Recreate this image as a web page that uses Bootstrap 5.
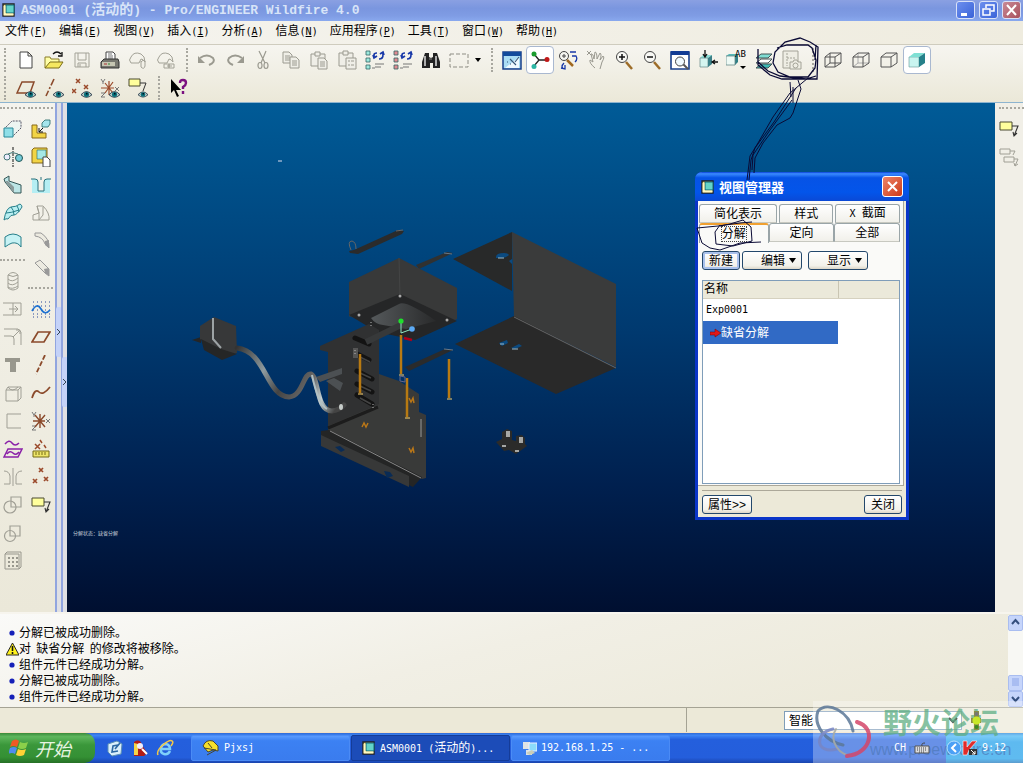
<!DOCTYPE html>
<html lang="zh-CN">
<head>
<meta charset="utf-8">
<meta name="viewport" content="width=device-width, initial-scale=1">
<title>ASM0001 (活动的) - Pro/ENGINEER Wildfire 4.0</title>
<link href="https://cdn.jsdelivr.net/npm/bootstrap@5.3.0/dist/css/bootstrap.min.css" rel="stylesheet">
<script src="https://cdn.jsdelivr.net/npm/bootstrap@5.3.0/dist/js/bootstrap.bundle.min.js"></script>
<style>
body{background:#fff;color:#000;font:12px/16px "Liberation Sans","Noto Sans CJK SC",sans-serif}
button,select,input{font:inherit;color:inherit}
svg{display:block}
.half{font:10px/16px "DejaVu Sans Mono",monospace}
.desk{min-height:100vh;padding:0 1px 5px 0}
.face{background:#ece9d8}
/* window title */
.win-title{height:21px;padding:0 2px 2px 2px;background:linear-gradient(#8aa0e2,#7a96df 40%,#7f9ce4 75%,#89a9ee);color:#d8e4f8}
.win-title h1{font:bold 14px/18px "Noto Sans CJK SC",sans-serif;margin:0;padding-left:5px;white-space:pre}
.win-title .half{font:bold 13px/18px "Liberation Mono",monospace}
.capt{width:19px;height:18px;padding:0;border:1px solid #d9e2f8;border-radius:3px;background:linear-gradient(135deg,#6c8fee,#3a63d8)}
.capt.shut{background:linear-gradient(135deg,#c98a96,#a8505c)}
/* menu */
.menus{height:24px;padding:0 5px 2px;gap:12px;background:linear-gradient(90deg,#f5f4ef,#efecdf);border-bottom:1px solid #cfccbe}
.menus a{color:#000;text-decoration:none;white-space:nowrap}
.bars{height:58px;padding:1px 0;background:linear-gradient(#f6f5f0,#ebe8d8);border-bottom:1px solid #8db4cf}
.tool{width:28px;height:28px;padding:3px;border:1px solid transparent;border-radius:4px;background:none;flex:none}
.tool svg{width:20px;height:20px}
.tool.held{background:#fff;border-color:#a9b8d0}
.grip-v{height:24px;border-left:2px dotted #a8a79f;flex:none}
.g-start{margin:0 5px 0 4px;width:3px}
.g-mid{margin:0 5px 0 6px;width:2px}
.drop{width:12px;padding:0;border:0;background:none}
.grip-h{height:12px;width:25px;padding-top:4px}
.grip-h::before{content:"";display:block;border-top:2px dotted #a8a79f}
.side{width:55px;background:linear-gradient(#f4f3ed,#ebe8d9)}
.side-col{width:28px}
.side-col .tool{margin-left:-1px}
.sash{width:6px;border-left:2px solid #91a5df;background:#dfe0e4}
.sash button{width:6px;height:50px;margin-left:-1px;padding:0;border:0;background:#c4d2f8;border-radius:2px}
.s1 button{margin-top:204px}.s2 button{margin-top:254px}
.stage{background:linear-gradient(#005b97,#00396f 45%,#00204f 75%,#000f30);min-width:0;min-height:509px}
.stage>svg{width:100%;height:100%;position:absolute;inset:0}
.right{width:28px;background:#f1efe7}
/* view manager */
.mgr{right:86px;top:69px;width:214px;border:3px solid #0a35c8;border-top:0;border-radius:7px 7px 0 0;background:#ece9d8;z-index:3}
.mgr-head{height:29px;margin:0 -3px;padding:0 6px;border-radius:7px 7px 0 0;background:linear-gradient(#0a3fd8,#3a8bff 6%,#0653e6 20%,#0355ea 70%,#0a49d6);color:#fff}
.mgr-head h2{font:bold 13px/20px "Noto Sans CJK SC",sans-serif;margin:0;padding-left:4px}
.mgr-shut{width:21px;height:21px;padding:0;border:1px solid #fff;border-radius:3px;background:linear-gradient(135deg,#ee8468,#cc3a18)}
.pane{margin:0 2px 0 0;padding:3px 3px 1px 0;background:#fafaf8;border-right:1px solid #aca899;border-bottom:1px solid #aca899}
.tabs{padding-left:1px}
.tabs .first{gap:2px}
.tabs button{height:19px;padding:0;border:1px solid #9aa5a8;border-bottom-color:#c7c8c0;border-radius:3px 3px 0 0;background:linear-gradient(#fff,#f1f0ea);white-space:nowrap}
.tabs button.on{background:#fafaf8;border-top:2px solid #f0a030;border-bottom:0;height:20px}
.on span{outline:1px dotted #444}
.w80{flex:80 1 0}.w66{flex:66 1 0}.w55{flex:55 1 0}.w70{flex:70 1 0}
.acts{gap:2px}
.xp{height:19px;padding:0;border:1px solid #23486c;border-radius:3px;background:linear-gradient(#fff,#f2f1ea 80%,#dcd7c8);line-height:16px}
.xp.def{box-shadow:inset 0 0 0 2px #a9c1ec}
.xp.s{width:38px}.xp.m{width:50px}.xp.l{width:60px}
.list{margin:10px 0 0 4px;height:204px;border:1px solid #7f9db9;background:#fff}
.list table{width:100%;border-collapse:collapse;table-layout:fixed}
.list th{height:17px;padding:0 1px;font-weight:400;background:#ebe9da;border-bottom:1px solid #d5d1bf;line-height:15px}
.list th+th{border-left:1px solid #c9c5b2}
.list td{height:23px;padding:0 3px}
.list .namecol{width:69%}
.list .pick{background:#316ac5;color:#fff}
.foot{margin:4px 4px 0;padding:4px 0 3px;border-top:1px solid #aca899}
/* messages and status */
.log{height:96px;padding:11px 0 0 6px;background:linear-gradient(165deg,#fafaf8,#f1efe5 45%,#ebe8d7);border-top:2px solid #f7f5ee;border-bottom:1px solid #a5a394}
.log li{height:16px}
.log svg{width:13px;height:14px;flex:none}
.gapped{padding:0 2px}
.roll{width:15px;background:#f8f8f4;margin-top:-10px}
.roll button{height:16px;width:15px;padding:0;border:1px solid #a9bdf0;border-radius:2px;background:#c6d5fb}
.status{height:25px;border-bottom:1px solid #f4e0c4}
.status .part{width:337px;border-left:1px solid #a5a394;padding:1px 36px 0 97px}
.status select{height:19px;width:178px;border:1px solid #7f9db9;background:#fff;padding:0;line-height:16px}
/* taskbar */
.task{height:30px;background:linear-gradient(#2f6bd6,#3f85f5 8%,#245fdd 22%,#245edc 82%,#1a45ae);color:#fff}
.start{width:95px;padding:0 0 0 9px;border:0;border-radius:0 10px 10px 0;background:linear-gradient(#3a8a3a,#5eb65c 12%,#3a973a 40%,#349034 80%,#267026);color:#e8f5e2;font:italic 18px/26px "Noto Sans CJK SC",sans-serif;gap:6px}
.quick{gap:5px;padding:0 15px 0 11px}
.quick a{width:20px}
.job{width:159px;height:26px;margin-right:1px;padding:0 10px;border:1px solid #4b8bf5;border-radius:2px;background:linear-gradient(#5a9bff,#3c81f3 20%,#3a7cee);color:#fff;white-space:pre}
.job.now{background:#1c4cb8;border-color:#153c98}
.tray{width:77px;background:linear-gradient(#1a7fd8,#3fb4f5 10%,#159bea 30%,#169cea 85%,#1270b8)}
.front{position:relative;z-index:6}
/* overlays */
.pen{left:690px;top:36px;width:135px;height:220px;pointer-events:none;z-index:5}
.brand{right:0;bottom:5px;width:211px;height:62px;background:#ffffff50;pointer-events:none;z-index:4}
</style>
</head>
<body>
<svg width="0" height="0" class="position-absolute" aria-hidden="true"><defs>
<symbol id="app" viewBox="0 0 14 14"><path d="M1 1h11v12H1z" fill="#ffe98a" stroke="#222" stroke-width="1.400"/><path d="M4 2h8v8H4z" fill="#63d4c8" stroke="#167"/><path d="M2.500 3v8.500h9" fill="none" stroke="#fff8c0" stroke-width="1.800"/></symbol>
<symbol id="eye" viewBox="0 0 10 6"><path d="M0 3.200Q5-2.500 10 3.200Q5 8 0 3.200z" fill="#b9c9c6" stroke="#234" stroke-width=".8"/><circle cx="5" cy="3" r="2.300" fill="#08707a"/><path d="M4.500 1.500h1.500v1.500H4.500z" fill="#012"/></symbol>
<symbol id="flag" viewBox="0 0 20 20"><path d="M1 3h12v8H1z" fill="#ffff9c" stroke="#4b4a30"/><path d="M13 7h6l-4 10m-1-4 1 4 3-3" fill="none" stroke="#333" stroke-width="1.100"/></symbol>
<symbol id="tree" viewBox="0 0 20 20"><g stroke="#366" stroke-width=".8" fill="currentColor"><path d="M1 1h4v4H1zM1 8h4v4H1zM1 15h4v4H1z"/></g><path d="M10 14h9M10 17h6M7 18h3" stroke="#777"/><path d="M9 7V5q0-2 3-2M8 5l1 3 3-2m6-3v2q0 4-4 4m5-4-1-3-3 2" fill="none" stroke="#1838a8" stroke-width="1.700"/></symbol>
</defs></svg>

<div class="desk d-flex flex-column position-relative">
<header>
 <div class="win-title d-flex align-items-center">
  <svg width="14" height="14"><use href="#app"/></svg>
  <h1><span class="half">ASM0001 (</span>活动的<span class="half">) - Pro/ENGINEER Wildfire 4.0</span></h1>
  <div class="ms-auto d-flex gap-1">
   <button class="capt" aria-label="最小化"><svg width="17" height="16"><path d="M4 11h6v3H4z" fill="#fff"/></svg></button>
   <button class="capt" aria-label="还原"><svg width="17" height="16" fill="none" stroke="#fff" stroke-width="1.500"><path d="M6 6V3h8v6h-3M3 7h7v6H3z"/></svg></button>
   <button class="capt shut" aria-label="关闭"><svg width="17" height="16"><path d="m4 3 9 10M13 3 4 13" stroke="#fff" stroke-width="2"/></svg></button>
  </div>
 </div>
 <nav class="menus d-flex align-items-center">
  <a href="#">文件<span class="half">(<u>F</u>)</span></a><a href="#">编辑<span class="half">(<u>E</u>)</span></a><a href="#">视图<span class="half">(<u>V</u>)</span></a><a href="#">插入<span class="half">(<u>I</u>)</span></a><a href="#">分析<span class="half">(<u>A</u>)</span></a><a href="#">信息<span class="half">(<u>N</u>)</span></a><a href="#">应用程序<span class="half">(<u>P</u>)</span></a><a href="#">工具<span class="half">(<u>T</u>)</span></a><a href="#">窗口<span class="half">(<u>W</u>)</span></a><a href="#">帮助<span class="half">(<u>H</u>)</span></a>
 </nav>
 <div class="bars">
  <div class="d-flex align-items-center">
   <i class="grip-v g-start"></i>
   <button class="tool" aria-label="新建"><svg viewBox="0 0 20 20"><path d="M4 2h8l4 4v12H4zM12 2v4h4" fill="#fff" stroke="#444"/></svg></button>
   <button class="tool" aria-label="打开"><svg viewBox="0 0 20 20"><path d="M1 18V7h5l1 2h8v3" fill="#ffffa8" stroke="#8a7c28"/><path d="m1 18 5-6h13l-4 6z" fill="#f6e860" stroke="#7a6c18"/><path d="M9 4q4-4 8 0m1-2v4h-4" fill="none" stroke="#111" stroke-width="1.300"/></svg></button>
   <button class="tool" aria-label="保存"><svg viewBox="0 0 20 20" fill="none" stroke="#a3a297"><path d="M3 3h14v14H3zM6 3v7h8V3M6 17v-4h8v4M8 14v3"/></svg></button>
   <button class="tool" aria-label="打印"><svg viewBox="0 0 20 20"><path d="M6 10V2h7l2 2v6" fill="#fff" stroke="#444"/><path d="M8 4h4M8 6h5M8 8h5" stroke="#777"/><path d="M1 12l3-3h14l1 3v6H1z" fill="#77776f" stroke="#333"/><path d="M2 12h13v4H2z" fill="#c6c6b2"/><path d="M4 14h3" stroke="#a33"/><path d="M8 14h2" stroke="#383"/></svg></button>
   <button class="tool" aria-label="发送"><svg viewBox="0 0 20 20" fill="none" stroke="#a3a297"><path d="M3 13q-3-3 0-6 3-6 10-3 4 2 4 8-2-3-4-3l-2 4zM13 11v6q3 3 4-1v-5q-2-2-4 1"/></svg></button>
   <button class="tool" aria-label="发送链接"><svg viewBox="0 0 20 20" fill="none" stroke="#a3a297"><path d="M3 13q-3-3 0-6 3-6 10-3 4 2 4 8-2-3-4-3l-2 4zM8 14h5v4H8zm5 0h5v4h-5zM11 16h5"/></svg></button>
   <i class="grip-v g-mid"></i>
   <button class="tool" aria-label="撤消"><svg viewBox="0 0 20 20"><path d="M3 8q7-5 13 0 3 4-4 7" fill="none" stroke="#9b9a90" stroke-width="2"/><path d="M1 6v7h7z" fill="#9b9a90"/></svg></button>
   <button class="tool" aria-label="重做"><svg viewBox="0 0 20 20"><path d="M17 8q-7-5-13 0-3 4 4 7" fill="none" stroke="#9b9a90" stroke-width="2"/><path d="M19 6v7h-7z" fill="#9b9a90"/></svg></button>
   <button class="tool" aria-label="剪切"><svg viewBox="0 0 20 20" fill="none" stroke="#9b9a90" stroke-width="1.200"><path d="m6 1 6 12M13 1 8 13"/><ellipse cx="7" cy="15.500" rx="2" ry="3"/><ellipse cx="13" cy="15.500" rx="2" ry="3"/></svg></button>
   <button class="tool" aria-label="复制"><svg viewBox="0 0 20 20" fill="#efeee7" stroke="#9b9a90"><path d="M2 2h6l3 3v8H2zM4 6h5M4 8h5M4 10h5"/><path d="M9 7h6l3 3v8H9zM11 11h5M11 13h5M11 15h5"/></svg></button>
   <button class="tool" aria-label="粘贴"><svg viewBox="0 0 20 20" fill="#efeee7" stroke="#9b9a90"><path d="M2 4h14v12H2z"/><path d="M6 2h5v4H6z"/><path d="M9 8h6l3 3v8H9zM11 12h5M11 14h5M11 16h5"/></svg></button>
   <button class="tool" aria-label="选择性粘贴"><svg viewBox="0 0 20 20" fill="#efeee7" stroke="#9b9a90"><path d="M2 3h14v13H2z"/><path d="M6 1h5v4H6z"/><path d="M9 8h10v11H9zM11 11h2M11 15h2M14 11h3M14 15h3"/></svg></button>
   <button class="tool" aria-label="再生" style="color:#9eeade"><svg><use href="#tree"/></svg></button>
   <button class="tool" aria-label="再生管理器" style="color:#e08a90"><svg><use href="#tree"/></svg></button>
   <button class="tool" aria-label="查找"><svg viewBox="0 0 20 20"><path d="M4 3h4v4l2 1 2-1V3h4l3 9v6h-7v-5H9v5H1v-6z" fill="#222"/><path d="M4 6v10M15 6v10" stroke="#ddd" stroke-width="1.500"/><path d="M8 9h3" stroke="#888"/></svg></button>
   <button class="tool" aria-label="选取框"><svg viewBox="0 0 20 20"><path d="M1 4h18v13H1z" fill="none" stroke="#8e8d84" stroke-dasharray="4 2"/></svg></button>
   <button class="drop" aria-label="选取选项"><svg width="12" height="6"><path d="M2 1h6L5 5z"/></svg></button>
   <i class="grip-v g-mid"></i>
   <button class="tool" aria-label="重画"><svg viewBox="0 0 20 20"><path d="M1 2h18v17H1z" fill="#aadcf4" stroke="#183f8a" stroke-width="1.500"/><path d="m3 18 14-11v11z" fill="#eefaff"/><path d="M1 2h18v4H1z" fill="#124a9c"/><path d="m8 9 6 6m3-8-4 5M5 12h1m2 2h1" stroke="#357" stroke-width="1.100"/></svg></button>
   <button class="tool held" aria-label="旋转中心"><svg viewBox="0 0 20 20"><path d="m4 4 5 6h8M9 10l-5 6" stroke="#222" fill="none" stroke-width="1.300"/><circle cx="4" cy="4" r="2.500" fill="#1a9c2e"/><circle cx="17" cy="9.500" r="2.500" fill="#c01818"/><circle cx="4" cy="16.500" r="2.500" fill="#2db7a5"/></svg></button>
   <button class="tool" aria-label="定向模式"><svg viewBox="0 0 20 20"><circle cx="6" cy="6" r="4.500" fill="#f5f5f0" stroke="#444"/><path d="M6 4v4M4 6h4" stroke="#444"/><path d="m9 10 6 6" stroke="#a06820" stroke-width="2.500"/><path d="M12 2h6M14 6h4q2 3-1 6M6 13q-4 4 0 6m-3-1 4 1V15" fill="none" stroke="#1838a8" stroke-width="1.300"/></svg></button>
   <button class="tool" aria-label="平移"><svg viewBox="0 0 20 20" fill="none" stroke="#99988f"><path d="m1 1 4 4m0-4L1 5M9 18q-6-5-5-8l3 2-2-8q2-1 3 5l1-7q2 0 2 7l3-6q2 1 0 7l3-4q2 1-1 6l-2 7"/></svg></button>
   <button class="tool" aria-label="放大"><svg viewBox="0 0 20 20"><path d="m12 12 6 7" stroke="#9d6c28" stroke-width="2.500"/><circle cx="8" cy="7" r="5.500" fill="#f8f8f4" stroke="#444"/><path d="M5 7h6M8 4v6" stroke="#111" stroke-width="1.500"/></svg></button>
   <button class="tool" aria-label="缩小"><svg viewBox="0 0 20 20"><path d="m12 12 6 7" stroke="#9d6c28" stroke-width="2.500"/><circle cx="8" cy="7" r="5.500" fill="#f8f8f4" stroke="#444"/><path d="M5 7h6" stroke="#111" stroke-width="1.500"/></svg></button>
   <button class="tool" aria-label="重新调整"><svg viewBox="0 0 20 20"><path d="M1 2h18v17H1z" fill="#fff" stroke="#183f8a" stroke-width="1.600"/><path d="M1 1h18v4H1z" fill="#123c94"/><path d="m13 14 5 5" stroke="#555" stroke-width="2"/><circle cx="10" cy="11.500" r="4.500" fill="#f0faff" stroke="#444"/></svg></button>
   <button class="tool" aria-label="重定向"><svg viewBox="0 0 20 20"><path d="m2 8 3-3h9l-4 3z" fill="#8fe0d8"/><path d="M2 8h8v9H2z" fill="#d5f5f0" stroke="#688" stroke-width=".7"/><path d="m10 8 4-3v9l-4 3z" fill="#3a8088"/><path d="M7 0v6M5 4l2 3 2-3M20 12h-5m2-2-3 2 3 2" stroke="#111" stroke-width="1.300" fill="none"/></svg></button>
   <button class="tool" aria-label="已命名视图"><svg viewBox="0 0 20 20"><path d="m0 6 3-2h9L9 6z" fill="#55b8b8"/><path d="m9 6 3-2v8l-3 3z" fill="#2f7f86"/><path d="M0 6h9v9H0z" fill="#eefaf5" stroke="#688" stroke-width=".8"/><path d="M14 16h6l-3 3z"/><text x="9" y="7" font-family="DejaVu Sans Mono" font-size="9">AB</text></svg></button>
   <button class="tool" aria-label="层"><svg viewBox="0 0 20 20"><g stroke="#455"><path d="m2 18 5-4h11l-4 4z" fill="#3cb9b4"/><path d="m2 13 5-4h11l-4 4z" fill="#fff"/><path d="m2 8 5-4h11l-4 4z" fill="#7fdcd2"/></g></svg></button>
   <button class="tool" aria-label="视图管理器"><svg viewBox="0 0 20 20" fill="#eeede4" stroke="#a3a297"><path d="M1 1h15v17H1z"/><path d="M5 3v13M5 8h8" stroke-dasharray="2 1"/><path d="M8 12h3l1-2h3l1 2h3v7H8z"/><circle cx="13.500" cy="15.500" r="2.500"/></svg></button>
   <i class="grip-v g-mid"></i>
   <button class="tool" aria-label="线框"><svg viewBox="0 0 20 20" fill="none" stroke="#555"><path d="M2 7h10v10H2zM7 3h11v10H7zM2 7l5-4M12 7l6-4M12 17l6-4M2 17l5-4"/></svg></button>
   <button class="tool" aria-label="隐藏线"><svg viewBox="0 0 20 20" fill="none" stroke="#555"><path d="M7 3v10h11M7 13l-5 4" stroke="#aaa"/><path d="M2 7h10v10H2zl5-4h11v10l-6 4M12 7l6-4"/></svg></button>
   <button class="tool" aria-label="消隐"><svg viewBox="0 0 20 20" fill="none" stroke="#555"><path d="M2 7h10v10H2zl5-4h11v10l-6 4M12 7l6-4"/></svg></button>
   <button class="tool held" aria-label="着色"><svg viewBox="0 0 20 20"><path d="M2 7h10v10H2z" fill="#c9f5f0" stroke="#699" stroke-width=".6"/><path d="m2 7 5-4h11l-6 4z" fill="#7fe0d4"/><path d="m12 7 6-4v10l-6 4z" fill="#26818a"/></svg></button>
  </div>
  <div class="d-flex align-items-center">
   <i class="grip-v g-start"></i>
   <button class="tool" aria-label="基准平面"><svg viewBox="0 0 20 20"><path d="M1 15 6 4h12l-4 11z" fill="none" stroke="#8b4a2b" stroke-width="1.500"/><use href="#eye" x="9" y="13" width="11" height="7"/></svg></button>
   <button class="tool" aria-label="基准轴"><svg viewBox="0 0 20 20"><path d="M10 1 2 18" stroke="#8b4a2b" stroke-width="1.600" stroke-dasharray="7 2 2 2"/><use href="#eye" x="9" y="13" width="11" height="7"/></svg></button>
   <button class="tool" aria-label="基准点"><svg viewBox="0 0 20 20"><path d="m4 1 4 4m0-4L4 5m-4 6 4 4m0-4-4 4m12-8 4 4m0-4-4 4" stroke="#9b4a2b" stroke-width="1.500"/><use href="#eye" x="9" y="13" width="11" height="7"/></svg></button>
   <button class="tool" aria-label="坐标系"><svg viewBox="0 0 20 20"><path d="m1 1 2 3 2-3M3 4v2M1 15h4l-4 4h4m10-10 4 4m0-4-4 4" stroke="#777" fill="none"/><path d="M1 10h13M9 3v14M5 5l8 10M13 4 5 15" stroke="#9b4a2b" stroke-width="1.200"/><use href="#eye" x="9" y="13" width="11" height="7"/></svg></button>
   <button class="tool" aria-label="注释"><svg viewBox="0 0 20 20"><path d="M1 1h11v7H1z" fill="#ffff9c" stroke="#4b4a30"/><path d="M12 5h6l-3 8" fill="none" stroke="#333"/><use href="#eye" x="10" y="13" width="10" height="7"/></svg></button>
   <i class="grip-v g-mid"></i>
   <button class="tool" aria-label="上下文帮助"><svg viewBox="0 0 20 20"><path d="M2 1v14l3-3 3 7 2-1-3-6h5z"/><path d="M11 5q0-3 3-3t3 3q0 2-3 4v2M14 13v3" fill="none" stroke="#7b1080" stroke-width="2.400"/></svg></button>
  </div>
 </div>
</header>

<main class="d-flex flex-grow-1">
 <aside class="side d-flex">
  <div class="side-col">
   <div class="grip-h"></div>
   <button class="tool" aria-label="拉伸"><svg viewBox="0 0 20 20"><path d="m1 10 8-8h9v7l-8 8" fill="#edf5f2" stroke="#556" stroke-dasharray="2 1"/><path d="M1 9h9v9H1z" fill="#90dfe8" stroke="#288898"/></svg></button>
   <button class="tool" aria-label="旋转"><svg viewBox="0 0 20 20"><path d="M10 0v20" stroke="#111" stroke-dasharray="3 1 1 1"/><circle cx="4" cy="10" r="3" fill="#eef" stroke="#477"/><circle cx="16" cy="11" r="3.500" fill="#75cbd8" stroke="#255"/><path d="M5 7q4-3 10 0" fill="none" stroke="#477"/></svg></button>
   <button class="tool" aria-label="可变剖面扫描"><svg viewBox="0 0 20 20"><path d="m1 4 5-3v5l12 4v8h-7L2 7z" fill="#bce5e6" stroke="#355"/><path d="m2 6 9 12V12l-6-6z" fill="#8b9b9b"/></svg></button>
   <button class="tool" aria-label="边界混合"><svg viewBox="0 0 20 20"><path d="M1 17Q3 5 8 4q5 0 9-3 2 1 2 3-5 8-8 8-3-1-6 4-2-1-4 1z" fill="#b9eff2" stroke="#267f8a"/><path d="M3 10q5 0 13-3M8 4q3 3 3 8M14 3q2 3 2 6" fill="none" stroke="#267f8a"/></svg></button>
   <button class="tool" aria-label="造型"><svg viewBox="0 0 20 20"><path d="M2 16V6q8-6 16 0v10q-3-5-9-4-3 1-7 4z" fill="#c7f2f4" stroke="#267f8a"/></svg></button>
   <div class="grip-h"></div>
   <button class="tool" aria-label="螺旋"><svg viewBox="0 0 20 20" fill="none" stroke="#a09f95"><path d="M5 4q5-5 10 0v13q-5 4-10 0zM5 4q5 3 10 0M5 8q4 4 10-1M5 12q4 4 10-1M5 16q4 3 10-1"/></svg></button>
   <button class="tool" aria-label="延伸"><svg viewBox="0 0 20 20" fill="none" stroke="#a09f95"><path d="M0 4h10v12H0M10 4h8v12h-8M6 10h9m-3-3 3 3-3 3"/></svg></button>
   <button class="tool" aria-label="倒角"><svg viewBox="0 0 20 20" fill="none" stroke="#a09f95"><path d="M1 2h14l3 3v13M1 9h7q3 0 3 3v6M10 10l7-7m-4 0h4v4" /></svg></button>
   <button class="tool" aria-label="孔"><svg viewBox="0 0 20 20"><path d="M2 3h15v4h-4v10H7V7H2z" fill="#98978d"/></svg></button>
   <button class="tool" aria-label="壳"><svg viewBox="0 0 20 20" fill="none" stroke="#a09f95"><path d="M3 7h12v11H3zl2-3h13l-3 3m3-3v11l-3 3M5 4q4 6 10 0"/></svg></button>
   <button class="tool" aria-label="筋"><svg viewBox="0 0 20 20" fill="none" stroke="#a09f95"><path d="M18 3H4v14h14"/></svg></button>
   <button class="tool" aria-label="偏移"><svg viewBox="0 0 20 20" fill="none" stroke="#8a20a8" stroke-width="1.500"><path d="M2 5q4-5 7-1t7 0M1 18l4-8h14l-4 8zM4 15q3-4 6-1t6-1"/></svg></button>
   <button class="tool" aria-label="镜像"><svg viewBox="0 0 20 20" fill="none" stroke="#a09f95"><path d="M10 1v18M1 4q5 0 6 5v8H1M19 4q-5 0-6 5v8h6"/></svg></button>
   <button class="tool" aria-label="合并"><svg viewBox="0 0 20 20" fill="none" stroke="#a09f95" stroke-width="1.200"><path d="M8 2h10v10H8z"/><circle cx="7" cy="12" r="6"/></svg></button>
   <button class="tool" aria-label="相交"><svg viewBox="0 0 20 20" fill="none" stroke="#a09f95" stroke-width="1.200"><path d="M7 3h10v10H7z"/><circle cx="7" cy="13" r="5.500"/></svg></button>
   <button class="tool" aria-label="阵列"><svg viewBox="0 0 20 20" fill="none" stroke="#98978d"><path d="M2 3h14v15H2zl2-2h14v15l-2 2"/><path d="M5 7h10M5 11h10M5 15h10" stroke-width="2" stroke-dasharray="2 2"/></svg></button>
  </div>
  <div class="side-col">
   <div class="grip-h"></div>
   <button class="tool" aria-label="装配"><svg viewBox="0 0 20 20"><path d="M1 6h5v8h9v5H1z" fill="#f2d445" stroke="#87681a"/><path d="m11 4 3-3h5v4l-2 3h-6z" fill="#a5e5ec" stroke="#266" stroke-width=".8"/><path d="m12 9-4 4m0-4v4h4" stroke="#111" fill="none"/></svg></button>
   <button class="tool" aria-label="创建元件"><svg viewBox="0 0 20 20"><path d="M1 3 3 1h13v13l-2 2H1z" fill="#f2d445" stroke="#87681a"/><path d="M6 3h9v9H6z" fill="#a4e8e6" stroke="#266" stroke-width=".6"/><path d="M12 10h4l3 3v7h-7z" fill="#fff" stroke="#444"/></svg></button>
   <button class="tool" aria-label="切口"><svg viewBox="0 0 20 20"><path d="M1 4h3q3 0 3 3v9h6V7q0-3 3-3h3v14H1z" fill="#b5eef3"/><path d="M0 4h4q3 0 3 3v9h6V7q0-3 3-3h4M10 2v3" fill="none" stroke="#28717c"/></svg></button>
   <button class="tool" aria-label="混合"><svg viewBox="0 0 20 20" fill="none" stroke="#a09f95"><path d="M6 3h6q7 7 6 14H2v-5l6-2zM6 3l2 7v7m4-13v8l-4 5"/></svg></button>
   <button class="tool" aria-label="圆角"><svg viewBox="0 0 20 20"><path d="M4 2h6q9 6 8 15l-4-4Q12 6 4 5z" fill="#eceae0" stroke="#999"/><path d="m14 10 4-1v8l-4-3z" fill="#999"/></svg></button>
   <button class="tool" aria-label="边倒角"><svg viewBox="0 0 20 20"><path d="m4 4 5-3 9 9v7l-4-3z" fill="#eceae0" stroke="#999"/><path d="m13 10 5-1v8l-4-3z" fill="#999"/></svg></button>
   <div class="grip-h"></div>
   <button class="tool" aria-label="草绘"><svg viewBox="0 0 20 20"><path d="M2 3h17M2 7h17M2 11h17M2 15h17M2 18h17" stroke="#28469a" stroke-dasharray="1 3"/><path d="M1 12q5-9 9-2t9 1" fill="none" stroke="#1d71d1" stroke-width="1.700"/></svg></button>
   <button class="tool" aria-label="平面"><svg viewBox="0 0 20 20"><path d="M1 15 7 5h12l-6 10z" fill="none" stroke="#8b4a2b" stroke-width="1.700"/></svg></button>
   <button class="tool" aria-label="轴"><svg viewBox="0 0 20 20"><path d="M14 0 5 19" stroke="#8b4a2b" stroke-width="1.800" stroke-dasharray="5 2"/></svg></button>
   <button class="tool" aria-label="曲线"><svg viewBox="0 0 20 20"><path d="M1 15Q4 5 8 9t11-5" fill="none" stroke="#8b4a2b" stroke-width="1.700"/></svg></button>
   <button class="tool" aria-label="坐标系"><svg viewBox="0 0 20 20"><path d="m1 1 2 3 2-3M3 4v2M1 15h4l-4 4h4m10-11 4 4m0-4-4 4" stroke="#777" fill="none"/><path d="M2 10h12M9 3v14M4 4l10 12M14 4 4 16" stroke="#8b4a2b" stroke-width="1.400"/></svg></button>
   <button class="tool" aria-label="分析"><svg viewBox="0 0 20 20"><path d="m4 5 5 5m0-5-5 5m5-9 2 3m2 2 2 3" stroke="#9b4a2b" stroke-width="1.500"/><path d="M2 12h16v6H2z" fill="#eee569" stroke="#746a16"/><path d="M5 13v3m3-3v3m3-3v3m3-3v3" stroke="#746a16"/></svg></button>
   <button class="tool" aria-label="点"><svg viewBox="0 0 20 20"><path d="m8 1 4 4m0-4L8 5m-6 7 4 4m0-4-4 4m11-6 4 4m0-4-4 4" stroke="#9b4a2b" stroke-width="1.700"/></svg></button>
   <button class="tool" aria-label="注释"><svg><use href="#flag"/></svg></button>
  </div>
 </aside>
 <div class="sash s1"><button aria-label="展开"><svg width="5" height="8"><path d="m1 1 3 3-3 3" fill="none" stroke="#345"/></svg></button></div>
 <div class="sash s2"><button aria-label="展开"><svg width="5" height="8"><path d="m1 1 3 3-3 3" fill="none" stroke="#345"/></svg></button></div>

 <section class="stage flex-grow-1 position-relative">
  <svg viewBox="67 103 928 509" preserveAspectRatio="xMinYMin meet">
   <defs>
    <linearGradient id="cable" x1="235" y1="350" x2="335" y2="410" gradientUnits="userSpaceOnUse"><stop offset="0" stop-color="#333"/><stop offset=".3" stop-color="#8f9b9f"/><stop offset=".5" stop-color="#444"/><stop offset=".7" stop-color="#666"/><stop offset=".85" stop-color="#c4d0d2"/><stop offset="1" stop-color="#444"/></linearGradient>
    <linearGradient id="hump"><stop offset="0" stop-color="#55595b"/><stop offset="1" stop-color="#292a2b"/></linearGradient>
   </defs>
   <path d="M278 161h4" stroke="#dde"/>
   <!-- flat straps -->
   <path d="m349 251 5-1 44-20 6 1-2 3-44 20-8-1z" fill="#2b2b2b"/><path d="M351 250q-4-9 1-9 4 1 4 8M396 231l7-1" fill="none" stroke="#666"/>
   <path d="m416 265 31-13 6 1-34 16z" fill="#303131"/>
   <path d="m405 367 40-18 8 1-44 21z" fill="#2a2b2c"/><path d="m444 253 8 1M444 349l9 1" stroke="#687888"/>
   <!-- open sheet cover -->
   <path d="m453 259 59-27v59z" fill="#282929"/><path d="m512 232 104 52v83l-102-50z" fill="#3a3b3b"/><path d="m514 316 102 52-60 26-101-50z" fill="#292929"/><path d="m514 317 102 51" stroke="#666"/>
   <path d="M496 257q0-4 8-4 4 0 5 2-3 3-8 3h-5m13 3 3-2v5zM499 343l8-3 1 3-6 3zm12 5 8-4 3 2-7 3z" fill="#0b4a80"/><path d="M498 258h6M500 344h4M512 349h6" stroke="#9abacb"/>
   <!-- main housing -->
   <path d="m349 282 50-24 58 30v31l-42 21-66-24z" fill="#383939"/><path d="m399 258 1 38-51 20" fill="none" stroke="#444545"/><path d="m349 315 51-21 57 27-42 19-38-8z" fill="#252627"/><path d="m371 318 28-14q7-4 37 17l-30 8-23-4q-8-1-12-7z" fill="url(#hump)"/>
   <circle cx="400" cy="296" r="1.500" fill="#aaa"/><circle cx="359" cy="315" r="1.500" fill="#aaa"/><circle cx="447" cy="320" r="1.500" fill="#aaa"/>
   <!-- bracket -->
   <path d="m320 346 49-22 10 6v76l-51 21V352l-8-2z" fill="#303132"/><path d="m328 426 51-22V374l20 7 20 13v18l7 3v63l-4 1-94-46z" fill="#393a39"/><path d="m321 431 8-1 93 47-9 10-92-43z" fill="#242525"/><path d="m330 431 91 47" stroke="#878787"/><path d="m328 428 50-21" stroke="#1c1c1c" stroke-width="3"/>
   <path d="m321 435 88 41v11l-88-41z" fill="#373838"/><path d="m335 447 5-1 5 4-4 2zm49 24 6 1 3 4-6 2z" fill="#092b55"/>
   <path d="m357 354 12 6m-12 11 15 8m-15 5 15 8m-15 3 15 9m-17-66 14 6" stroke="#131313" stroke-width="5" stroke-linecap="round"/><path d="m360 357 10 5m-10 11 11 5m-11 8 11 5m-11 7 11 6" stroke="#444" stroke-width="1.500"/>
   <path d="m366 342 35-17" stroke="#37393a" stroke-width="6"/><path d="M353 348h5v10h-5z" fill="#555"/><path d="M371 322v6M373 404v5M355 350v6" stroke="#bbb" stroke-dasharray="1 2"/>
   <path d="m316 377 26-9v6l-22 8zM326 381l14 10 3-8-9-5z" fill="#4c5053"/>
   <!-- plug and cable -->
   <path d="m192 340 9-3v6z" fill="#252525"/><path d="m200 326 14-9 22 9 1 27-12 4-25-18z" fill="#373839"/><path d="m201 339 20 10 16 5-15 6-18-10z" fill="#252626"/><path d="M213 318v21l8 9" fill="none" stroke="#9da3a5" stroke-width="2"/>
   <path d="M237 348c29 3 29 48 52 49 14-1 14-24 22-23 8 4 5 37 21 37q8-1 12-6" fill="none" stroke="url(#cable)" stroke-width="5" stroke-linecap="round"/><path d="M312 375q6 29 15 34" fill="none" stroke="#b1c0c4" stroke-width="2"/><ellipse cx="341" cy="407" rx="2" ry="3" fill="#c6ccc9"/>
   <!-- screws -->
   <path d="M360 354v39M401 335v39M407 378v39M449 359v39" stroke="#b87a12" stroke-width="2.500"/><path d="M358 394h5M399 375h5M405 418h5M447 399h5" stroke="#ffd36a"/>
   <path d="m362 427 2-4 2 4 2-4M409 398l2 4 2-4 1 5M409 448l2 4 2-4 1 5" fill="none" stroke="#b87618" stroke-width="1.500"/><path d="M421 419v18" stroke="#999"/>
   <path d="M401 322v11l11-4" fill="none" stroke="#8fe9c2"/><circle cx="401" cy="321" r="2.600" fill="#1fe02c"/><circle cx="412" cy="329" r="2.800" fill="#5caaf5"/><path d="m404 338 8 2" stroke="#b00018" stroke-width="2.500"/>
   <path d="m400 376 5 1v5l-5-1z" fill="none" stroke="#668"/>
   <!-- small clamps -->
   <path d="m496 442 6-3v-7l5-3 5 2v9l4 1v-5l6-1 3 3v6l2 2-11 8-7-4-5 1z" fill="#2b2b2a"/><path d="M508 431v6M521 437v6M504 445v2M517 450v2" stroke="#a6a7a5" stroke-width="4"/>
   <text x="73" y="535" font-family="Noto Sans CJK SC" font-size="5" fill="#c3cbd6">分解状态：缺省分解</text>
  </svg>

  <section class="mgr position-absolute">
   <div class="mgr-head d-flex align-items-center">
    <svg width="14" height="14"><use href="#app"/></svg><h2>视图管理器</h2>
    <button class="mgr-shut ms-auto" aria-label="关闭"><svg width="19" height="19"><path d="m5 5 9 9m0-9-9 9" stroke="#fff" stroke-width="2"/></svg></button>
   </div>
   <div class="pane">
    <div class="tabs">
     <div class="d-flex first"><button class="w80">简化表示</button><button class="w55">样式</button><button class="w66"><span class="half">X </span>截面</button></div>
     <div class="d-flex"><button class="on w70"><span>分解</span></button><button class="w66">定向</button><button class="w66">全部</button></div>
    </div>
    <div class="d-flex ps-1 pt-2 acts">
     <button class="xp def s">新建</button>
     <button class="xp l d-flex align-items-center justify-content-end pe-1 gap-1">编辑<svg width="8" height="5"><path d="M0 0h7L3.500 5z"/></svg></button>
     <button class="xp l ms-1 d-flex align-items-center justify-content-end pe-1 gap-1">显示<svg width="8" height="5"><path d="M0 0h7L3.500 5z"/></svg></button>
    </div>
    <div class="list">
     <table>
      <colgroup><col class="namecol"><col></colgroup>
      <thead><tr><th>名称</th><th></th></tr></thead>
      <tbody><tr><td><span class="half">Exp0001</span></td><td></td></tr>
      <tr><td class="pick"><span class="d-flex align-items-center ps-1"><svg width="11" height="10"><path d="M0 4h5V1l6 4-6 4V7H0z" fill="#e01818" stroke="#700" stroke-width=".5"/></svg>缺省分解</span></td><td></td></tr></tbody>
     </table>
    </div>
   </div>
   <div class="foot d-flex justify-content-between"><button class="xp m">属性&gt;&gt;</button><button class="xp s">关闭</button></div>
  </section>
 </section>

 <aside class="right">
  <div class="grip-h ms-1"></div>
  <button class="tool" aria-label="注释"><svg><use href="#flag"/></svg></button>
  <button class="tool" aria-label="注释传播"><svg viewBox="0 0 20 20" fill="none" stroke="#a09f95"><path d="M1 2h10v5H1zM11 4h5l-2 4M5 10h10v5H5zM15 12h4l-3 7m-1-3 1 3 3-2"/></svg></button>
 </aside>
</main>

<section class="log d-flex">
 <ul class="list-unstyled m-0 flex-grow-1">
  <li class="d-flex align-items-center"><svg viewBox="0 0 13 14"><circle cx="6" cy="7" r="2.600" fill="#1520b8"/></svg>分解已被成功删除。</li>
  <li class="d-flex align-items-center"><svg viewBox="0 0 13 14"><path d="M6.500 1 13 13H0z" fill="#fff21c" stroke="#222"/><path d="M6.500 4v5m0 1v2" stroke="#111" stroke-width="1.600"/></svg><span>对<span class="gapped"> 缺省分解 </span>的修改将被移除。</span></li>
  <li class="d-flex align-items-center"><svg viewBox="0 0 13 14"><circle cx="6" cy="7" r="2.600" fill="#1520b8"/></svg>组件元件已经成功分解。</li>
  <li class="d-flex align-items-center"><svg viewBox="0 0 13 14"><circle cx="6" cy="7" r="2.600" fill="#1520b8"/></svg>分解已被成功删除。</li>
  <li class="d-flex align-items-center"><svg viewBox="0 0 13 14"><circle cx="6" cy="7" r="2.600" fill="#1520b8"/></svg>组件元件已经成功分解。</li>
 </ul>
 <div class="roll d-flex flex-column">
  <button aria-label="向上"><svg width="13" height="13"><path d="m3 8 3.500-4L10 8" fill="none" stroke="#35507f" stroke-width="2"/></svg></button>
  <button class="mt-auto" aria-label="滑块"><svg width="13" height="13"><path d="M3 3h7M3 5h7M3 7h7M3 9h7" stroke="#8ca5e8"/></svg></button>
  <button aria-label="向下"><svg width="13" height="13"><path d="m3 5 3.500 4L10 5" fill="none" stroke="#35507f" stroke-width="2"/></svg></button>
 </div>
</section>

<section class="status face d-flex justify-content-end">
 <div class="part d-flex align-items-center gap-2">
  <select aria-label="选择过滤器"><option>智能</option></select>
  <svg width="12" height="19" class="flex-shrink-0 front"><path d="M4 0h5v19H4zM1 7h10v5H1z" fill="#8a8e45"/><circle cx="6.500" cy="3" r="2" fill="#777"/><circle cx="6.500" cy="9.500" r="4" fill="#c8e828"/><circle cx="6.500" cy="16" r="2" fill="#3a8a22"/></svg>
 </div>
</section>

<footer class="task d-flex align-items-center">
 <button class="start d-flex align-items-center align-self-stretch"><svg width="20" height="20" viewBox="0 0 20 20"><path d="M3 3q4-3 7 0L8 9q-4-2-7 0z" fill="#ee5a24"/><path d="M11 4q4 2 8 0l-2 6q-4 2-8 0z" fill="#8bd04a"/><path d="M1 10q4-2 7 0l-2 6q-3-2-7 0z" fill="#4f8cf0"/><path d="M9 11q4 2 8 0l-2 6q-4 2-8 0z" fill="#ffd236"/></svg>开始</button>
 <div class="quick d-flex">
  <a href="#" aria-label="显示桌面"><svg width="18" height="18"><path d="m2 5 9-3 5 3-1 10-9 2-4-4z" fill="#d9eefb" stroke="#5d91b5"/><path d="m12 6-5 1-1 6 6-1M9 10l5-6" fill="none" stroke="#2b67a3" stroke-width="1.600"/></svg></a>
  <a href="#" aria-label="看图"><svg width="18" height="18"><path d="M3 17V3q6-4 8 3l5 8-3 3z" fill="#b11d18"/><path d="M3 4v12h4V5z" fill="#f5d54a"/><circle cx="9" cy="7" r="3" fill="#eef"/><path d="m11 10 5 5" stroke="#fff" stroke-width="2"/></svg></a>
  <a href="#" aria-label="浏览器"><svg width="18" height="18"><path d="M14 12q-2 4-6 3-4-1-3-6 1-4 5-4 4 1 4 5H5" fill="none" stroke="#7fd0fa" stroke-width="2.500"/><path d="M2 16Q0 12 7 6t9-4q2 1-1 5" fill="none" stroke="#f4c846" stroke-width="1.500"/></svg></a>
 </div>
 <button class="job d-flex align-items-center"><svg width="18" height="18"><path d="M1 7q3-7 10-5l5 5v5l-5-1-5 2z" fill="#f5df29" stroke="#443"/><path d="m2 9 12 2-9 5M6 4l4 5" fill="none" stroke="#443"/></svg><span class="half ps-1">Pjxsj</span></button>
 <button class="job now d-flex align-items-center"><svg width="14" height="14"><use href="#app"/></svg><span class="ps-1"><span class="half">ASM0001 (</span>活动的<span class="half">)...</span></span></button>
 <button class="job d-flex align-items-center"><svg width="15" height="16"><path d="M1 2h7v7H1zM4 10h6v5H4z" fill="#dfe3e4"/><path d="M7 3h8v8H7z" fill="#8bdcfb" stroke="#eef"/><path d="m4 13 6-3 3 3-5 2z" fill="#c9cdb8"/></svg><span class="half ps-1">192.168.1.25 - ...</span></button>
 <div class="ms-auto d-flex align-items-center gap-2 pe-3 front"><span class="half">CH</span><svg width="16" height="12"><path d="M1 4h14v7H1z" fill="#ddd" stroke="#555"/><path d="M3 6h10M3 8h10M5 10h6" stroke="#444" stroke-dasharray="1 1"/><path d="M8 4q-1-3 3-3" fill="none" stroke="#444"/></svg></div>
 <div class="tray d-flex align-items-center align-self-stretch">
  <svg width="16" height="16" class="front"><circle cx="8" cy="8" r="7" fill="#4ba0f5" stroke="#b9e2ff"/><path d="m10 4-4 4 4 4" fill="none" stroke="#fff" stroke-width="2"/></svg>
  <svg width="16" height="16" class="front"><path d="M1 1h4v6l5-6h5L7 10l-2 5H1z" fill="#e02b2b" stroke="#fff" stroke-width=".6"/><path d="M7 9h8v6H7z" fill="#333"/><path d="m9 10 4 4m0-3v3h-3" stroke="#fff" fill="none"/></svg>
  <span class="half ps-1 front">9:12</span>
 </div>
</footer>

<!-- freehand ink over the window -->
<svg class="pen position-absolute" viewBox="690 36 135 220" fill="none" stroke="#0a0a35">
 <path stroke-width="1.300" d="M758 49V65L770 75 782 79H817L818 47 810 42 800 38 785 42 775 52 773 63 778 72 790 77H808L815 68 816 60 812 48 808 45H787L777 48M758 62L768 71 780 76 806 79 816 76M816 45L815 60"/>
 <path d="M790 82 791 97M793 87V103M798 80 801 89 793 113 790 118 777 125 763 143 755 158 754 173M808 78 790 93 773 117 758 143 750 156 747 180M796 88 774 122 755 148 751 160 749 180M792 100 770 130 753 155 752 170"/>
 <path d="M697 228 718 226 740 223 752 222M697 228 702 243 710 248 720 250 740 243 761 242M720 225 715 232 716 244 733 246 752 241 751 227 743 220 730 224 720 226"/>
</svg>
<svg class="brand position-absolute" viewBox="813 701 211 62">
 <g fill="none" stroke-linecap="round" opacity=".85"><path d="M843 745c-18-4-30-20-25-34 10-10 31 0 35 20" stroke="#5c7898" stroke-width="3"/><path d="M833 729c-20 4-17 26 4 20" stroke="#7886c4" stroke-width="3"/><path d="M836 729c-8 12 5 28 15 26" stroke="#a8aaa0" stroke-width="2"/><path d="M857 722c20 6 14 32-10 34" stroke="#d4476a" stroke-width="4"/></g>
 <text x="883" y="734" font-family="Noto Sans CJK SC" font-weight="700" font-size="29" fill="#5fae84" fill-opacity=".75">野火论坛</text>
 <text x="870" y="755" font-family="Liberation Sans" font-size="16" fill="#4d78b8" fill-opacity=".7">www.proewildfire.cn</text>
</svg>
</div>
</body>
</html>
